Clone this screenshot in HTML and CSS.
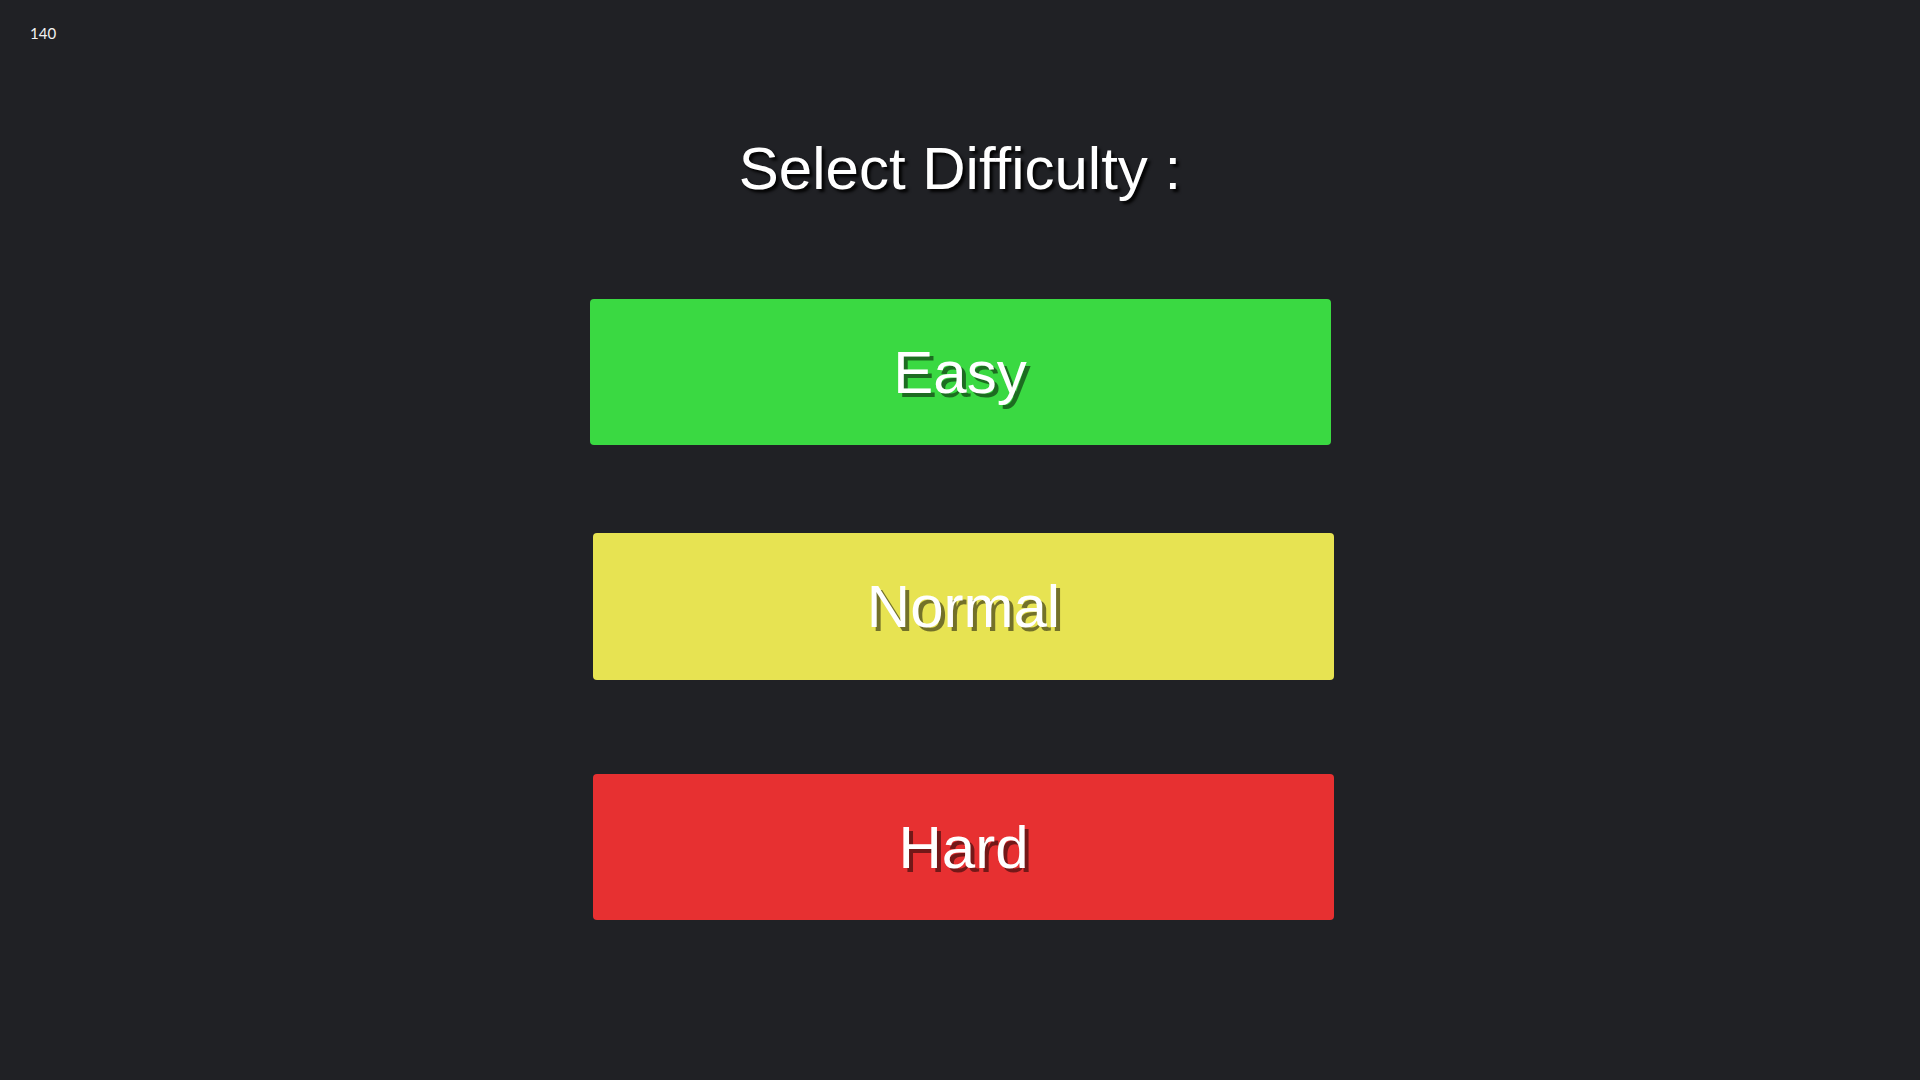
FILE: index.html
```html
<!DOCTYPE html>
<html lang="en">
<head>
<meta charset="utf-8">
<title>Select Difficulty</title>
<link rel="stylesheet" href="styles.css">
</head>
<body>
<div class="fps">140</div>
<main class="menu">
  <h1 class="title">Select Difficulty :</h1>
  <button class="btn btn-easy">Easy</button>
  <button class="btn btn-normal">Normal</button>
  <button class="btn btn-hard">Hard</button>
</main>
</body>
</html>
```
FILE: styles.css
```css
html, body {
  margin: 0;
  padding: 0;
}
body {
  width: 1920px;
  height: 1080px;
  background: #202125;
  font-family: "Liberation Sans", Arial, sans-serif;
  color: #fff;
  overflow: hidden;
  position: relative;
}
.fps {
  position: absolute;
  left: 30px;
  top: 23px;
  font-family: "Lato", "Open Sans", sans-serif;
  font-size: 15px;
  font-weight: 400;
  color: #f2f2f2;
  line-height: 20px;
}
.menu {
  display: flex;
  flex-direction: column;
  align-items: center;
  padding-top: 135px;
}
.title {
  margin: 0 0 97px 0;
  font-size: 60px;
  font-weight: 400;
  line-height: 67px;
  text-shadow: 3px 3px 3px rgba(0, 0, 0, 0.9);
}
.btn {
  display: flex;
  align-items: center;
  justify-content: center;
  width: 741px;
  height: 147px;
  border: none;
  border-radius: 4px;
  padding: 0;
  font-family: "Liberation Sans", Arial, sans-serif;
  font-size: 60px;
  color: #fff;
  text-shadow: 4px 4px 0 rgba(0, 0, 0, 0.5);
  cursor: pointer;
}
.btn-easy {
  background: #3ad942;
  height: 146px;
  margin-bottom: 88px;
}
.btn-normal {
  background: #e7e352;
  margin-left: 7px;
  margin-bottom: 94px;
}
.btn-hard {
  background: #e73031;
  height: 146px;
  margin-left: 7px;
}
```
